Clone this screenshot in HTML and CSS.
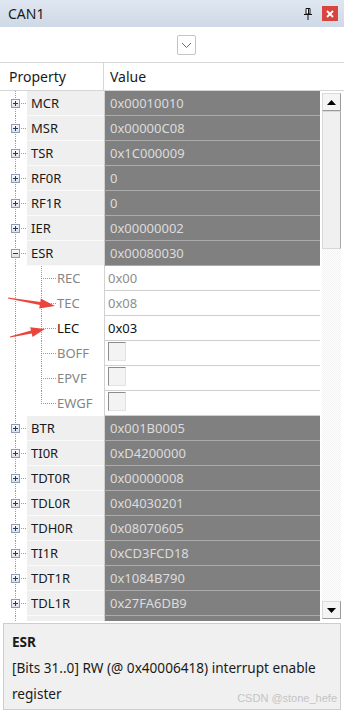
FILE: index.html
```html
<!DOCTYPE html>
<html lang="en">
<head>
    <meta charset="UTF-8">
    <meta name="viewport" content="width=device-width, initial-scale=1.0">
    <title>CAN1 | Peripherals</title>
    <link rel="stylesheet" href="styles.css">
</head>
<body>

<div class="window">

    <!-- Title Bar -->
    <div class="titlebar">
        <span class="title">CAN1</span>
        <svg class="pin" width="8" height="12" viewBox="0 0 8 12">
            <path d="M2 0.5h4v5.5h-4z" fill="#fff" stroke="#111"/>
            <path d="M4.5 1v5" stroke="#111"/>
            <path d="M0 6.5h8" stroke="#111"/>
            <path d="M4 7v5" stroke="#111"/>
        </svg>
        <span class="close">
            <svg width="8" height="8" viewBox="0 0 8 8">
                <path d="M1 1l6 6M7 1l-6 6" stroke="#fff" stroke-width="1.8"/>
            </svg>
        </span>
    </div>

    <!-- Toolbar -->
    <div class="toolbar">
        <span class="dropdown">
            <svg width="11" height="7" viewBox="0 0 11 7">
                <path d="M1 1l4.5 4.5L10 1" fill="none" stroke="#6a6a6a"/>
            </svg>
        </span>
    </div>

    <!-- Grid Header -->
    <div class="grid-head">
        <div class="head-prop">Property</div>
        <div class="head-val">Value</div>
    </div>

    <!-- Grid Body -->
    <div class="grid-body">
        <div class="rows">
            <div class="row reg"><span class="tree"><i class="exp"></i></span><span class="name">MCR</span><span class="val">0x00010010</span></div>
            <div class="row reg"><span class="tree"><i class="exp"></i></span><span class="name">MSR</span><span class="val">0x00000C08</span></div>
            <div class="row reg"><span class="tree"><i class="exp"></i></span><span class="name">TSR</span><span class="val">0x1C000009</span></div>
            <div class="row reg"><span class="tree"><i class="exp"></i></span><span class="name">RF0R</span><span class="val">0</span></div>
            <div class="row reg"><span class="tree"><i class="exp"></i></span><span class="name">RF1R</span><span class="val">0</span></div>
            <div class="row reg"><span class="tree"><i class="exp"></i></span><span class="name">IER</span><span class="val">0x00000002</span></div>
            <div class="row reg"><span class="tree"><i class="exp open"></i></span><span class="name">ESR</span><span class="val">0x00080030</span></div>

            <div class="row field"><span class="tree"></span><span class="branch"></span><span class="name">REC</span><span class="val">0x00</span></div>
            <div class="row field"><span class="tree"></span><span class="branch"></span><span class="name">TEC</span><span class="val">0x08</span></div>
            <div class="row field edit"><span class="tree"></span><span class="branch"></span><span class="name">LEC</span><span class="val">0x03</span></div>
            <div class="row field"><span class="tree"></span><span class="branch"></span><span class="name">BOFF</span><span class="val"><i class="check"></i></span></div>
            <div class="row field"><span class="tree"></span><span class="branch"></span><span class="name">EPVF</span><span class="val"><i class="check"></i></span></div>
            <div class="row field"><span class="tree"></span><span class="branch last"></span><span class="name">EWGF</span><span class="val"><i class="check"></i></span></div>

            <div class="row reg"><span class="tree"><i class="exp"></i></span><span class="name">BTR</span><span class="val">0x001B0005</span></div>
            <div class="row reg"><span class="tree"><i class="exp"></i></span><span class="name">TI0R</span><span class="val">0xD4200000</span></div>
            <div class="row reg"><span class="tree"><i class="exp"></i></span><span class="name">TDT0R</span><span class="val">0x00000008</span></div>
            <div class="row reg"><span class="tree"><i class="exp"></i></span><span class="name">TDL0R</span><span class="val">0x04030201</span></div>
            <div class="row reg"><span class="tree"><i class="exp"></i></span><span class="name">TDH0R</span><span class="val">0x08070605</span></div>
            <div class="row reg"><span class="tree"><i class="exp"></i></span><span class="name">TI1R</span><span class="val">0xCD3FCD18</span></div>
            <div class="row reg"><span class="tree"><i class="exp"></i></span><span class="name">TDT1R</span><span class="val">0x1084B790</span></div>
            <div class="row reg"><span class="tree"><i class="exp"></i></span><span class="name">TDL1R</span><span class="val">0x27FA6DB9</span></div>
            <div class="row reg"><span class="tree"><i class="exp"></i></span><span class="name"></span><span class="val"></span></div>
        </div>

        <div class="scrollbar">
            <span class="sb-btn"><svg width="9" height="5" viewBox="0 0 9 5"><path d="M0 5L4.5 0L9 5z" fill="#000"/></svg></span>
            <span class="sb-thumb"></span>
            <span class="sb-track"></span>
            <span class="sb-btn"><svg width="9" height="5" viewBox="0 0 9 5"><path d="M0 0L4.5 5L9 0z" fill="#000"/></svg></span>
        </div>
    </div>

    <!-- Description -->
    <div class="desc">
        <p class="desc-title">ESR</p>
        <p>[Bits 31..0] RW (@ 0x40006418) interrupt enable register</p>
        <span class="watermark">CSDN @stone_hefe</span>
    </div>

    <!-- Annotation arrows -->
    <svg class="arrows" width="60" height="344" viewBox="0 0 60 344">
        <polygon points="8,297.6 40.3,302 40.8,298.6 55,306 39.2,308.4 39.8,305 8,298.6" fill="#e8453c"/>
        <polygon points="10,336.5 31,330.6 30.2,327.2 45,329 32.5,337 31.7,333.6 10,337.5" fill="#e8453c"/>
    </svg>
</div>

</body>
</html>
```

FILE: styles.css
```css
/* General Styles */
body {
    font-family: "Noto Sans", Arial, sans-serif;
    margin: 0;
    padding: 0;
    background-color: #fff;
    color: #1a1a1a;
}

.window {
    position: relative;
    width: 344px;
    height: 712px;
    overflow: hidden;
}

/* Title Bar */
.titlebar {
    display: flex;
    align-items: center;
    height: 27px;
    padding: 0 6px 0 8px;
    background: linear-gradient(#dfe7f1, #cdd9e6);
    box-sizing: border-box;
}

.title {
    flex: 1;
    font-size: 14px;
}

.pin {
    margin-right: 10px;
}

.close {
    display: flex;
    align-items: center;
    justify-content: center;
    width: 16px;
    height: 15px;
    background-color: #d8453f;
}

/* Toolbar */
.toolbar {
    height: 35px;
    padding: 8px 0 0 177px;
    box-sizing: border-box;
}

.dropdown {
    display: flex;
    align-items: center;
    justify-content: center;
    width: 19px;
    height: 20px;
    border: 1px solid #c4c4c4;
    border-radius: 2px;
    box-sizing: border-box;
}

/* Grid Header */
.grid-head {
    display: flex;
    height: 29px;
    border-top: 1px solid #d6d6d6;
    border-bottom: 1px solid #d6d6d6;
    font-size: 14px;
    line-height: 28px;
    box-sizing: border-box;
}

.head-prop {
    width: 104px;
    padding-left: 9px;
    border-right: 1px solid #d6d6d6;
    box-sizing: border-box;
}

.head-val {
    padding-left: 6px;
}

/* Grid Body */
.grid-body {
    display: flex;
    height: 530px;
    overflow: hidden;
}

.rows {
    width: 320px;
    font-size: 13px;
}

.row {
    display: flex;
    height: 25px;
    line-height: 24px;
}

.tree {
    flex: none;
    display: flex;
    align-items: center;
    width: 27px;
    padding-left: 11px;
    box-sizing: border-box;
    background:
        repeating-linear-gradient(to bottom, #9a9a9a 0 1px, transparent 1px 2px) 15px 0 / 1px 100% no-repeat;
}

.reg .tree {
    background:
        repeating-linear-gradient(to bottom, #9a9a9a 0 1px, transparent 1px 2px) 15px 0 / 1px 100% no-repeat,
        repeating-linear-gradient(to right, #9a9a9a 0 1px, transparent 1px 2px) 21px 12px / 6px 1px no-repeat;
}

/* Expander box */
.exp {
    width: 9px;
    height: 9px;
    border: 1px solid #8e9cb3;
    box-sizing: border-box;
    background:
        linear-gradient(#23386a, #23386a) center / 5px 1px no-repeat,
        linear-gradient(#23386a, #23386a) center / 1px 5px no-repeat,
        linear-gradient(#fbfcfd, #dbe1e9);
}

.exp.open {
    background:
        linear-gradient(#23386a, #23386a) center / 5px 1px no-repeat,
        linear-gradient(#fbfcfd, #dbe1e9);
}

.name {
    flex: none;
    width: 77px;
    padding-left: 4px;
    box-sizing: border-box;
    white-space: nowrap;
}

.reg .name {
    background-color: #efefef;
    border-bottom: 1px solid #fafafa;
}

.val {
    flex: 1;
    padding-left: 5px;
    border-left: 1px solid #d2d2d2;
    white-space: nowrap;
}

.reg .val {
    background-color: #808080;
    color: #dcdcdc;
    border-bottom: 1px solid #ababab;
}

/* Field rows */
.branch {
    flex: none;
    width: 30px;
    background:
        repeating-linear-gradient(to bottom, #9a9a9a 0 1px, transparent 1px 2px) 14px 0 / 1px 100% no-repeat,
        repeating-linear-gradient(to right, #9a9a9a 0 1px, transparent 1px 2px) 14px 12px / 15px 1px no-repeat;
}

.branch.last {
    background:
        repeating-linear-gradient(to bottom, #9a9a9a 0 1px, transparent 1px 2px) 14px 0 / 1px 13px no-repeat,
        repeating-linear-gradient(to right, #9a9a9a 0 1px, transparent 1px 2px) 14px 12px / 15px 1px no-repeat;
}

.field .name {
    width: 47px;
    padding-left: 0;
    color: #858585;
}

.field .val {
    color: #8e8e8e;
    border-bottom: 1px solid #cfcfcf;
    padding-left: 3px;
}

.field.edit .name,
.field.edit .val {
    color: #111;
}

.check {
    display: block;
    width: 18px;
    height: 19px;
    margin-top: 1px;
    background-color: #f3f3f3;
    border-top: 1px solid #8c8c8c;
    border-left: 1px solid #8c8c8c;
    border-right: 1px solid #e3e3e3;
    border-bottom: 1px solid #e3e3e3;
    box-sizing: border-box;
}

/* Scrollbar */
.scrollbar {
    display: flex;
    flex-direction: column;
    width: 19px;
    margin-left: 2px;
    padding: 2px 0;
    box-sizing: border-box;
}

.sb-btn {
    display: flex;
    align-items: center;
    justify-content: center;
    height: 18px;
    background-color: #f4f4f4;
    border: 1px solid #dadada;
    border-bottom-color: #9a9a9a;
    border-right-color: #9a9a9a;
    box-sizing: border-box;
}

.sb-thumb {
    height: 138px;
    background-color: #f0f0f0;
    border: 1px solid #d8d8d8;
    border-right-color: #a8a8a8;
    box-sizing: border-box;
}

.sb-track {
    flex: 1;
    background: repeating-conic-gradient(#f2f2f2 0 25%, #fff 0 50%) 0 0 / 2px 2px;
}

/* Description Panel */
.desc {
    position: relative;
    height: 87px;
    margin: 2px 3px 0;
    padding: 5px 8px 4px;
    background-color: #f0f0f0;
    border: 1px solid #cdcdcd;
    font-size: 13.6px;
    line-height: 26px;
    box-sizing: border-box;
}

.desc p {
    margin: 0;
}

.desc-title {
    font-weight: bold;
}

.watermark {
    position: absolute;
    right: 3px;
    bottom: 4px;
    font-family: Arial, "Liberation Sans", sans-serif;
    font-size: 11px;
    line-height: 14px;
    color: #c4c4c4;
}

/* Annotation arrows */
.arrows {
    position: absolute;
    left: 0;
    top: 0;
}
```
